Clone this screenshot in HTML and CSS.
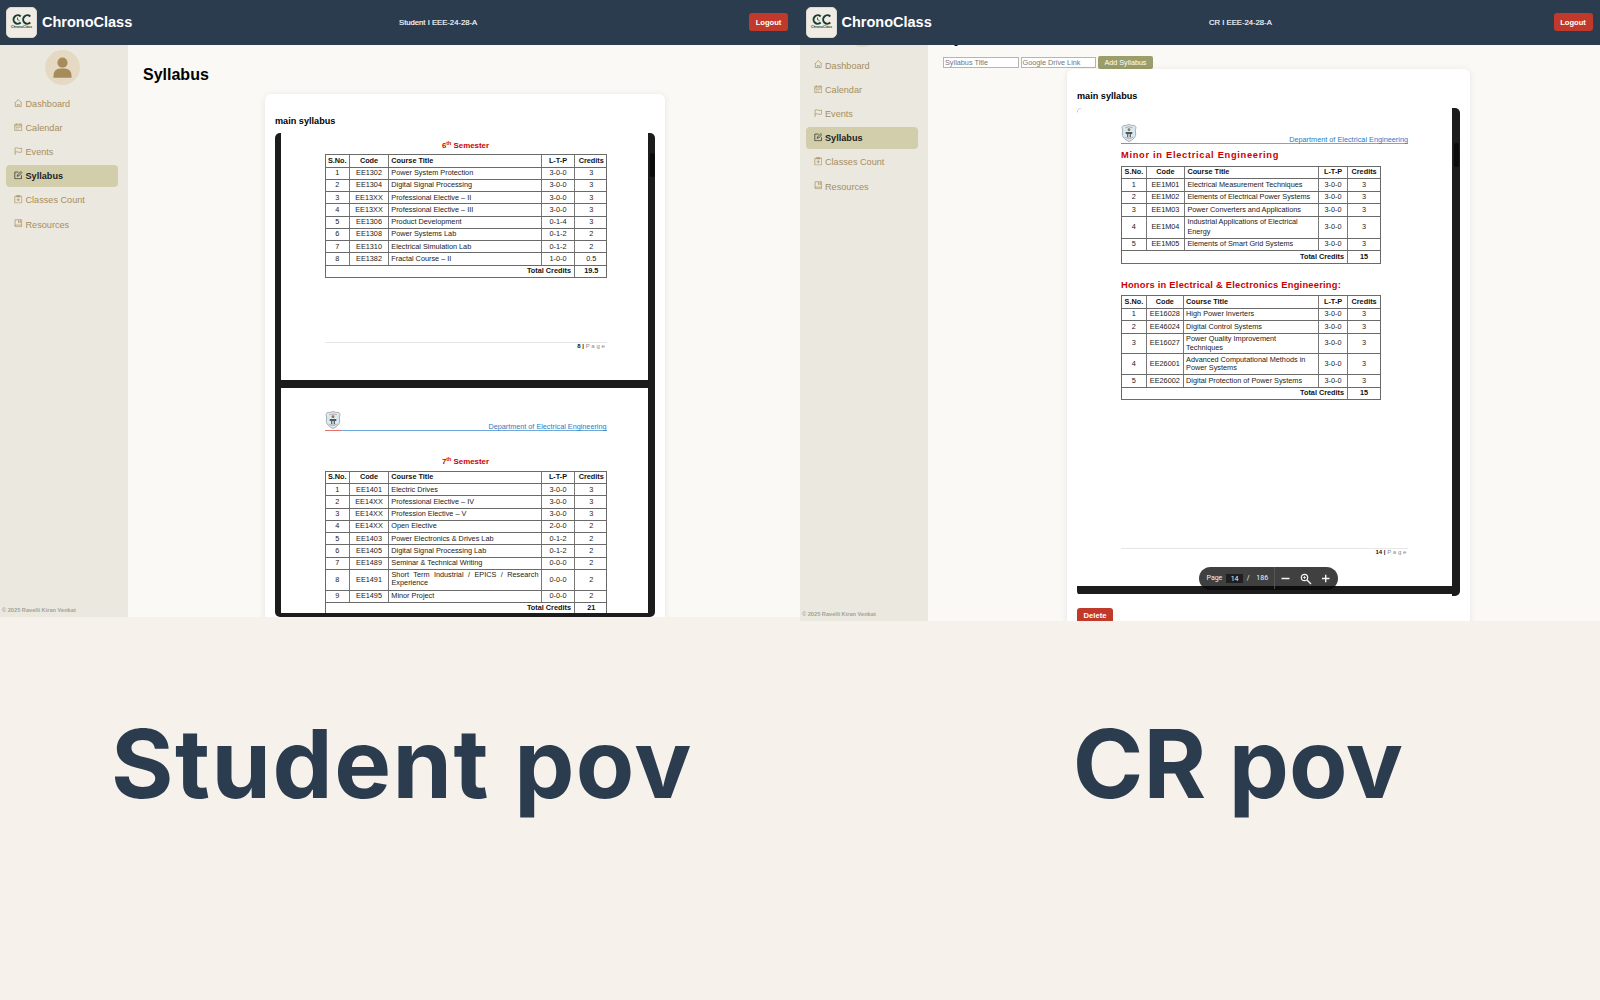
FILE: index.html
```
<!DOCTYPE html>
<html lang="en">
<head>
<meta charset="utf-8">
<title>ChronoClass</title>
<link rel="stylesheet" href="styles.css">
</head>
<body>
<svg width="0" height="0" class="defs">
  <symbol id="home" viewBox="0 0 16 16"><path d="M1.500 7.500 8 1 14.500 7.500M2.500 6.500v8h11v-8M6 14.500v-4h4v4"/></symbol>
  <symbol id="cal" viewBox="0 0 16 16"><path d="M1.500 2.500h13v12h-13zM1.500 5.500h13M4.500 .5v3M11.500 .5v3M4 8.500h2M7 8.500h2M10 8.500h2M4 11.500h2M7 11.500h2"/></symbol>
  <symbol id="flag" viewBox="0 0 16 16"><path d="M2 16V2c3-1.500 4.500 0 6.500 .5S12 3 14.500 2v7.500c-2.500 1-4 .8-6 .2S5 8.500 2 9.800"/></symbol>
  <symbol id="edit" viewBox="0 0 16 16"><path d="M8.500 2h-7v12.500h12.500V8M6 10l.5-2.500L13 1l2 2-6.500 6.500z"/></symbol>
  <symbol id="clip" viewBox="0 0 16 16"><path d="M1.500 2.500h13v12.500h-13zM5 1h6v2.500H5zM8 6v6M5 9h6"/></symbol>
  <symbol id="book" viewBox="0 0 16 16"><path d="M2 1.500h12.500v13H3.500A1.500 1.500 0 0 1 2 13zM2 13c0-1 .5-1.500 1.500-1.500h11M8.500 2v5l2-1.500 2 1.500V2"/></symbol>
  <symbol id="crest" viewBox="0 0 16 19">
    <path d="M2 1.500Q5 2 8 .5 11 2 14 1.500L15.500 4Q14 6 15 9.500 16 15 8 18.500 0 15 1 9.500 2 6 .5 4z" fill="#dbe9f0" stroke="#8c9ca5" stroke-width=".8"/>
    <path d="M4 4q4-2 8 0M3.500 14q4 3 9 0" stroke="#cc8d8d" fill="none" stroke-width=".8"/>
    <path d="M4.500 8.500h7v2h-1.500V14H6v-3.500H4.500z" fill="#4d5961"/><path d="M7.200 10.500h1.600v4H7.200z" fill="#cddde4"/>
    <circle cx="8" cy="6" r="1.500" fill="#8c7650"/>
  </symbol>
  <symbol id="brand" viewBox="0 0 20 11"><path d="M8.700 2.500A4.200 4.200 0 1 0 8.700 8.500M18.300 2.500a4.200 4.200 0 1 0 0 6" fill="none" stroke="#173f35" stroke-width="2"/><path d="M5.500 3.500v2.200l2 1" fill="none" stroke="#173f35" stroke-width=".8"/></symbol>
</svg>

<div class="board">
  <section class="panel">
    <div class="shot">
      <header class="topbar">
        <div class="logo"><svg><use href="#brand"/></svg><span>ChronoClass</span></div>
        <b class="name">ChronoClass</b>
        <span class="who">Student I EEE-24-28-A</span>
        <span class="logout">Logout</span>
      </header>
      <div class="body">
        <aside class="side">
          <div class="avatar"><svg viewBox="0 0 36 36"><circle cx="18" cy="13" r="5.200"/><path d="M8.700 28.500v-1.500q0-8 7.300-8h4q7.300 0 7.300 8v1.500z"/></svg></div>
          <nav>
            <a><svg><use href="#home"/></svg>Dashboard</a>
            <a><svg><use href="#cal"/></svg>Calendar</a>
            <a><svg><use href="#flag"/></svg>Events</a>
            <a class="on"><svg><use href="#edit"/></svg>Syllabus</a>
            <a><svg><use href="#clip"/></svg>Classes Count</a>
            <a><svg><use href="#book"/></svg>Resources</a>
          </nav>
          <small>© 2025 Ravelli Kiran Venkat</small>
        </aside>
        <main>
          <h1>Syllabus</h1>
          <div class="card">
            <h2>main syllabus</h2>
            <div class="viewer">
              <div class="sheets">
                <div class="sheet first">
                  <h3 class="sem">6<sup>th</sup> Semester</h3>
                  <div class="tbl">
                    <div class="r h"><i>S.No.</i><i>Code</i><i>Course Title</i><i>L-T-P</i><i>Credits</i></div>
                    <div class="r"><i>1</i><i>EE1302</i><i>Power System Protection</i><i>3-0-0</i><i>3</i></div>
                    <div class="r"><i>2</i><i>EE1304</i><i>Digital Signal Processing</i><i>3-0-0</i><i>3</i></div>
                    <div class="r"><i>3</i><i>EE13XX</i><i>Professional Elective – II</i><i>3-0-0</i><i>3</i></div>
                    <div class="r"><i>4</i><i>EE13XX</i><i>Professional Elective – III</i><i>3-0-0</i><i>3</i></div>
                    <div class="r"><i>5</i><i>EE1306</i><i>Product Development</i><i>0-1-4</i><i>3</i></div>
                    <div class="r"><i>6</i><i>EE1308</i><i>Power Systems Lab</i><i>0-1-2</i><i>2</i></div>
                    <div class="r"><i>7</i><i>EE1310</i><i>Electrical Simulation Lab</i><i>0-1-2</i><i>2</i></div>
                    <div class="r"><i>8</i><i>EE1382</i><i>Fractal Course – II</i><i>1-0-0</i><i>0.5</i></div>
                    <div class="r t"><i>Total Credits</i><i>19.5</i></div>
                  </div>
                  <div class="foot"><b>8 |</b> <span>Page</span></div>
                </div>
                <div class="sheet second">
                  <div class="dept"><svg><use href="#crest"/></svg><u>Department of Electrical Engineering</u></div>
                  <h3 class="sem">7<sup>th</sup> Semester</h3>
                  <div class="tbl">
                    <div class="r h"><i>S.No.</i><i>Code</i><i>Course Title</i><i>L-T-P</i><i>Credits</i></div>
                    <div class="r"><i>1</i><i>EE1401</i><i>Electric Drives</i><i>3-0-0</i><i>3</i></div>
                    <div class="r"><i>2</i><i>EE14XX</i><i>Professional Elective – IV</i><i>3-0-0</i><i>3</i></div>
                    <div class="r"><i>3</i><i>EE14XX</i><i>Profession Elective – V</i><i>3-0-0</i><i>3</i></div>
                    <div class="r"><i>4</i><i>EE14XX</i><i>Open Elective</i><i>2-0-0</i><i>2</i></div>
                    <div class="r"><i>5</i><i>EE1403</i><i>Power Electronics &amp; Drives Lab</i><i>0-1-2</i><i>2</i></div>
                    <div class="r"><i>6</i><i>EE1405</i><i>Digital Signal Processing Lab</i><i>0-1-2</i><i>2</i></div>
                    <div class="r"><i>7</i><i>EE1489</i><i>Seminar &amp; Technical Writing</i><i>0-0-0</i><i>2</i></div>
                    <div class="r two"><i>8</i><i>EE1491</i><i class="just">Short Term Industrial / EPICS / Research Experience</i><i>0-0-0</i><i>2</i></div>
                    <div class="r"><i>9</i><i>EE1495</i><i>Minor Project</i><i>0-0-0</i><i>2</i></div>
                    <div class="r t"><i>Total Credits</i><i>21</i></div>
                  </div>
                </div>
              </div>
              <div class="scroll"><div></div></div>
            </div>
          </div>
        </main>
      </div>
    </div>
    <p class="caption">Student pov</p>
  </section>

  <section class="panel cr">
    <div class="shot">
      <header class="topbar">
        <div class="logo"><svg><use href="#brand"/></svg><span>ChronoClass</span></div>
        <b class="name">ChronoClass</b>
        <span class="who">CR I EEE-24-28-A</span>
        <span class="logout">Logout</span>
      </header>
      <div class="body">
        <aside class="side">
          <div class="avatar"></div>
          <nav>
            <a><svg><use href="#home"/></svg>Dashboard</a>
            <a><svg><use href="#cal"/></svg>Calendar</a>
            <a><svg><use href="#flag"/></svg>Events</a>
            <a class="on"><svg><use href="#edit"/></svg>Syllabus</a>
            <a><svg><use href="#clip"/></svg>Classes Count</a>
            <a><svg><use href="#book"/></svg>Resources</a>
          </nav>
          <small>© 2025 Ravelli Kiran Venkat</small>
        </aside>
        <main>
          <h1>Syllabus</h1>
          <div class="form"><span class="field">Syllabus Title</span><span class="field">Google Drive Link</span><span class="add">Add Syllabus</span></div>
          <div class="card">
            <h2>main syllabus</h2>
            <div class="viewer">
              <div class="sheets">
                <div class="sheet">
                  <div class="dept"><svg><use href="#crest"/></svg><u>Department of Electrical Engineering</u></div>
                  <h3 class="minor">Minor in Electrical Engineering</h3>
                  <div class="tbl">
                    <div class="r h"><i>S.No.</i><i>Code</i><i>Course Title</i><i>L-T-P</i><i>Credits</i></div>
                    <div class="r"><i>1</i><i>EE1M01</i><i>Electrical Measurement Techniques</i><i>3-0-0</i><i>3</i></div>
                    <div class="r"><i>2</i><i>EE1M02</i><i>Elements of Electrical Power Systems</i><i>3-0-0</i><i>3</i></div>
                    <div class="r"><i>3</i><i>EE1M03</i><i>Power Converters and Applications</i><i>3-0-0</i><i>3</i></div>
                    <div class="r tall"><i>4</i><i>EE1M04</i><i>Industrial Applications of Electrical<br>Energy</i><i>3-0-0</i><i>3</i></div>
                    <div class="r"><i>5</i><i>EE1M05</i><i>Elements of Smart Grid Systems</i><i>3-0-0</i><i>3</i></div>
                    <div class="r t"><i>Total Credits</i><i>15</i></div>
                  </div>
                  <h3 class="honors">Honors in Electrical &amp; Electronics Engineering:</h3>
                  <div class="tbl hon">
                    <div class="r h"><i>S.No.</i><i>Code</i><i>Course Title</i><i>L-T-P</i><i>Credits</i></div>
                    <div class="r"><i>1</i><i>EE16028</i><i>High Power Inverters</i><i>3-0-0</i><i>3</i></div>
                    <div class="r"><i>2</i><i>EE46024</i><i>Digital Control Systems</i><i>3-0-0</i><i>3</i></div>
                    <div class="r two"><i>3</i><i>EE16027</i><i>Power Quality Improvement<br>Techniques</i><i>3-0-0</i><i>3</i></div>
                    <div class="r two"><i>4</i><i>EE26001</i><i>Advanced Computational Methods in<br>Power Systems</i><i>3-0-0</i><i>3</i></div>
                    <div class="r"><i>5</i><i>EE26002</i><i>Digital Protection of Power Systems</i><i>3-0-0</i><i>3</i></div>
                    <div class="r t"><i>Total Credits</i><i>15</i></div>
                  </div>
                  <div class="foot"><b>14 |</b> <span>Page</span></div>
                </div>
              </div>
              <div class="scroll"><div></div></div>
              <div class="pager">
                <span>Page</span><span class="num">14</span><span>/</span><span class="tot">186</span>
                <svg class="tools" viewBox="0 0 63 22"><path d="M.5 0v22" stroke="#5c5c5c" stroke-width=".8"/><path d="M7.500 11.500h8M48 11.500h7.500M51.700 7.700v7.500M33 13l4 4" stroke="#f4f4f4" stroke-width="1.400"/><circle cx="30.500" cy="10.500" r="3.200" fill="none" stroke="#f4f4f4" stroke-width="1.200"/><path d="M28.900 10.500h3.200M30.500 8.900v3.200" stroke="#f4f4f4" stroke-width=".8"/></svg>
              </div>
            </div>
            <span class="delete">Delete</span>
          </div>
        </main>
      </div>
    </div>
    <p class="caption">CR pov</p>
  </section>
</div>
</body>
</html>
```
FILE: styles.css
```
* { box-sizing: border-box; }
body { margin: 0; background: #f6f1ea; font-family: "Liberation Sans", Arial, sans-serif; color: #000; }
h1, h2, h3, p { margin: 0; }
i { font-style: normal; }
svg { display: block; }
.defs { position: absolute; }
.board { display: grid; grid-template-columns: 800px 800px; height: 1000px; overflow: hidden; }
.panel { display: flex; flex-direction: column; min-width: 0; }
.shot { height: 617px; display: flex; flex-direction: column; overflow: hidden; background: #faf9f5; }
.cr .shot { height: 621px; }

/* header */
.topbar { height: 45px; flex: none; background: #2c3c4f; color: #fff; display: flex; align-items: center; padding: 0 12px 1px 6px; position: relative; z-index: 2; }
.logo { width: 31px; height: 31px; border-radius: 5px; background: #f0ece4; border: 1px solid #dcdad5; display: flex; flex-direction: column; align-items: center; padding-top: 6px; }
.logo svg { width: 20px; height: 11px; }
.logo span { font-size: 3.4px; line-height: 4px; font-weight: bold; color: #173f35; }
.name { font-size: 14.5px; margin-left: 5px; width: 357px; }
.who { font-size: 7.7px; -webkit-text-stroke: .15px #fff; }
.logout { margin-left: auto; width: 39px; height: 18px; border-radius: 3px; background: #c0392b; font-size: 7.6px; font-weight: bold; display: flex; align-items: center; justify-content: center; }
.cr .name { width: 367.500px; margin-left: 4.500px; }
.cr .logout { margin-right: -4px; }
.cr .topbar { padding-right: 11.500px; }

/* sidebar */
.body { flex: 1; display: flex; min-height: 0; }
.side { width: 128px; flex: none; background: #ebe9df; display: flex; flex-direction: column; padding: 5px 0 3px; }
.avatar { width: 35px; height: 35px; margin-left: 44.500px; border-radius: 50%; background: #e5d9c3; flex: none; }
.avatar svg { fill: #a58c5a; }
nav { display: flex; flex-direction: column; gap: 2.15px; margin: 7.900px 10px 0 6px; }
nav a { height: 22px; display: flex; align-items: center; gap: 3px; padding-left: 8px; font-size: 9.15px; line-height: 22px; color: #a78d5c; border-radius: 4px; }
nav svg { width: 8.5px; height: 8.5px; margin-top: -2px; fill: none; stroke: currentColor; stroke-width: 1.3; }
nav .on { background: #d2ceab; color: #222; font-weight: bold; }
.side small { margin-top: auto; padding-left: 2px; font-size: 5.65px; line-height: 7px; font-weight: bold; color: #a5a298; }
.cr .side { padding-top: 0; }
.cr .avatar { margin: -33.500px 0 0 45px; }
.cr nav { gap: 2.2px; margin: 8.200px 10.500px 0 5.500px; }

/* content */
main { flex: 1; display: flex; flex-direction: column; min-width: 0; }
h1 { font-size: 16px; line-height: 20px; margin: 20.400px 0 0 15px; }
.card { width: 400px; height: 560px; flex: none; margin: 8.600px 0 0 137px; background: #fff; border-radius: 6px; box-shadow: 0 1px 7px rgba(0,0,0,.09); padding: 22px 10px 0; }
h2 { font-size: 9.15px; line-height: 11px; }
.viewer { margin-top: 6px; height: 484px; display: flex; background: #1c1c1c; border-radius: 5px; padding-left: 6px; overflow: hidden; position: relative; }
.sheets { width: 367px; height: 479.700px; overflow: hidden; display: flex; flex-direction: column; gap: 7.500px; }
.scroll { flex: 1; padding: 20px 0 0 2px; }
.scroll div { width: 5px; height: 24px; border-radius: 2px; background: #0b0b0b; }
.sheet { background: #fff; flex: none; padding: 0 41.500px 0 43.500px; }
.first { height: 247.500px; padding-top: 8.500px; }
.second { height: 300px; padding-top: 22px; }
h3 { color: #c00; }
.sem { font-size: 7.9px; line-height: 10px; text-align: center; }
.sem sup { font-size: 5.3px; line-height: 0; vertical-align: 2.800px; }
.first .sem { margin-bottom: 3px; }
.dept { height: 21px; display: flex; justify-content: space-between; align-items: flex-end; border-bottom: 1px solid #6faadc; color: #2b7bc8; font-size: 7.25px; line-height: 7.200px; }
.dept u { text-decoration: none; }
.dept svg { width: 16px; height: 20px; padding-bottom: 1px; margin-bottom: -1px; border-bottom: 1px solid #e2716c; }
.second .dept { margin-bottom: 26.500px; }
.second .sem { margin-bottom: 3.500px; }

/* course tables */
.tbl { --c: 23.5px 39px 153px 33px 33.500px; border: 1px solid #6a6a6a; border-bottom: 0; font-size: 7.3px; line-height: 8.5px; color: #222; }
.r { display: grid; grid-template-columns: var(--c); height: 12.260px; border-bottom: 1px solid #6a6a6a; }
.r i { display: flex; align-items: center; justify-content: center; border-left: 1px solid #777; white-space: nowrap; }
.r i:first-child { border-left: 0; }
.r i:nth-child(3) { justify-content: flex-start; padding-left: 2.300px; }
.r.h, .r.t { font-weight: bold; color: #111; }
.r.t { grid-template-columns: 248.500px 33.500px; }
.r.t i:first-child { justify-content: flex-end; padding-right: 3px; }
.r.two { height: 20.700px; }
.r i.just { display: block; white-space: normal; text-align: justify; padding: 1px 2.500px 0; }
.foot { margin-top: 64.500px; border-top: 1px solid #e6e6e6; padding: 0; text-align: right; font-size: 6px; line-height: 7px; color: #888; }
.foot b { color: #111; }
.foot span { letter-spacing: 1.700px; }

/* class representative view */
.cr h1 { margin-top: -17.200px; }
.form { display: flex; align-items: center; gap: 2px; margin: 7.700px 0 0 15px; height: 14px; flex: none; }
.field { width: 75.500px; height: 11px; border: 1px solid #b5b5b5; background: #fff; font-size: 7.3px; line-height: 9px; color: #777; padding-left: 1px; }
.add { width: 55px; height: 13.500px; border-radius: 2px; background: #9b9e6b; color: #fff; font-size: 7.2px; display: flex; align-items: center; justify-content: center; }
.cr .card { width: 403px; margin: -.6px 0 0 139px; padding-top: 22.200px; }
.cr .viewer { height: 488px; padding-left: 0; background: #fff; margin-top: 5.800px; }
.cr .sheets { width: 375px; height: 485.800px; background: #1c1c1c; }
.cr .sheet { width: 375px; height: 477.900px; padding: 15px 44px 0 44px; }
.cr .scroll { background: #1c1c1c; padding-top: 35px; }
.cr .dept { margin-bottom: 4.700px; font-size: 7.3px; }
.minor, .honors { font-size: 9.3px; line-height: 12px; white-space: nowrap; }
.minor { letter-spacing: .7px; margin-bottom: 5.300px; }
.honors { letter-spacing: .24px; margin: 15px 0 4.500px; }
.cr .tbl { --c: 23.800px 38.300px 134px 29px 33px; width: 260px; }
.cr .hon { --c: 23.800px 37px 135.300px 29px 33px; }
.cr .r { height: 12.500px; }
.cr .r.tall { height: 22px; line-height: 10.500px; }
.cr .r.two { height: 20.600px; }
.cr .r.t { grid-template-columns: 225.100px 33px; }
.cr .foot { margin-top: 147.800px; }
.pager { position: absolute; left: 121.500px; top: 459px; width: 139.500px; height: 23px; border-radius: 12px; background: linear-gradient(#404040 0 18.500px, #0d0d0d 19px); color: #f0f0f0; display: flex; align-items: center; padding-left: 8px; font: 7px Roboto, sans-serif; gap: 3.500px; }
.pager .num { width: 17.500px; height: 9px; line-height: 10px; background: #1f1f1f; text-align: center; }
.pager .tot { width: 15px; text-align: center; margin: 0 1px 0 1.500px; }
.tools { width: 63px; height: 22px; flex: none; fill: none; }
.delete { display: flex; justify-content: center; width: 36px; height: 18px; margin-top: 12px; border-radius: 3px; background: #c0392b; color: #fff; font-size: 7.6px; line-height: 16px; font-weight: bold; }

.caption { width: 800px; padding-left: 4px; text-align: center; margin-top: 77.500px; font: 650 95.500px/136px Inter, sans-serif; letter-spacing: 1.500px; color: #2c3c4f; white-space: nowrap; }
.cr .caption { margin-top: 73.500px; padding-left: 76px; letter-spacing: 0; }
```
